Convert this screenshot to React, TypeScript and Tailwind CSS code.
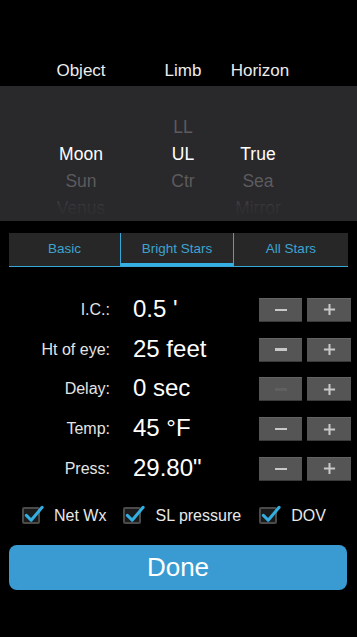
import React from "react";

const font = { fontFamily: '"Liberation Sans", Arial, sans-serif' };

function Check() {
  return (
    <span className="relative inline-block w-[18px] h-[17px] border-2 border-[#4a4a4a] bg-[#1a1a1a] rounded-[2px]">
      <svg className="absolute left-[-1px] top-[-5px]" width="23" height="21" viewBox="0 0 24 22">
        <path d="M3.5 12 L8.5 17 L20 3.5" fill="none" stroke="#33aee0" strokeWidth="3.2" strokeLinecap="round" strokeLinejoin="round" />
      </svg>
    </span>
  );
}

function StepBtn({ sign, disabled }: { sign: "-" | "+"; disabled?: boolean }) {
  return (
    <div className="h-[24px] bg-[#555555] border-t border-[#636363] border-b border-b-[#3a3a3a] flex items-center justify-center">
      {sign === "-" ? (
        <div className={`w-[12px] h-[2.5px] ${disabled ? "bg-[#606060]" : "bg-[#c8c8c8]"}`} />
      ) : (
        <svg width="13" height="13" viewBox="0 0 14 14">
          <path d="M7 1 V13 M1 7 H13" stroke="#c8c8c8" strokeWidth="2.2" />
        </svg>
      )}
    </div>
  );
}

const rows = [
  { label: "I.C.:", value: "0.5 '" },
  { label: "Ht of eye:", value: "25 feet" },
  { label: "Delay:", value: "0 sec", minusDisabled: true },
  { label: "Temp:", value: "45 °F" },
  { label: "Press:", value: '29.80"' },
];

const pickerRows: [string, string, string, string][] = [
  ["", "", "", "empty"],
  ["", "LL", "", "dim"],
  ["Moon", "UL", "True", "sel"],
  ["Sun", "Ctr", "Sea", "dim"],
  ["Venus", "", "Mirror", "faint"],
];

export default function App() {
  return (
    <div className="w-[357px] h-[637px] bg-black overflow-hidden flex flex-col" style={font}>
      {/* header */}
      <div className="h-[86px] flex items-end pb-[5px] pl-[30px]">
        <div className="grid grid-cols-[102px_102px_52px] w-full text-[17px] text-[#ececec] leading-[20px]">
          <div className="flex justify-center whitespace-nowrap">Object</div>
          <div className="flex justify-center whitespace-nowrap">Limb</div>
          <div className="flex justify-center whitespace-nowrap">Horizon</div>
        </div>
      </div>
      {/* picker */}
      <div className="relative h-[135px] bg-[#29282b] pl-[30px] overflow-hidden">
        {pickerRows.map((r, i) => {
          const cls =
            r[3] === "sel"
              ? "text-white"
              : r[3] === "faint"
              ? "text-[#3b3a3d]"
              : "text-[#5c5b5e]";
          return (
            <div key={i} className={`grid grid-cols-[102px_102px_48px] h-[27px] items-center text-[17.5px] leading-[20px] ${cls}`}>
              <div className="flex justify-center whitespace-nowrap">{r[0]}</div>
              <div className="flex justify-center whitespace-nowrap">{r[1]}</div>
              <div className="flex justify-center whitespace-nowrap">{r[2]}</div>
            </div>
          );
        })}
        <div className="absolute left-0 right-0 bottom-0 h-[16px] bg-gradient-to-b from-[#29282b]/40 to-[#29282b]" />
      </div>
      {/* tabs */}
      <div className="mt-[12px] mx-[9px] w-[339px] h-[34px] bg-[#272727] border-b border-[#36a7d6] grid grid-cols-[112px_113px_114px] text-[13.5px] text-[#3ea3cf]">
        <div className="flex items-center justify-center border-r border-[#36a7d6]">Basic</div>
        <div className="relative flex items-center justify-center border-r border-[#36a7d6]">
          Bright Stars
          <div className="absolute left-0 right-0 bottom-0 h-[3px] bg-[#36b0e2]" />
        </div>
        <div className="flex items-center justify-center">All Stars</div>
      </div>
      {/* value rows */}
      <div className="mt-[23px] flex flex-col">
        {rows.map((r) => (
          <div key={r.label} className="h-[39.75px] flex items-center">
            <div className="w-[110px] text-right text-[16px] text-[#e4e4e4] whitespace-nowrap">{r.label}</div>
            <div className="ml-[23px] w-[126px] text-[24px] text-white whitespace-nowrap leading-[26px] pb-[2px]">{r.value}</div>
            <div className="grid grid-cols-[43px_44px] gap-[5px]">
              <StepBtn sign="-" disabled={r.minusDisabled} />
              <StepBtn sign="+" />
            </div>
          </div>
        ))}
      </div>
      {/* checkboxes */}
      <div className="mt-[17px] h-[20px] flex items-center text-[16px] text-[#e8e8e8]">
        <div className="ml-[22px] flex items-center">
          <Check />
          <span className="ml-[14px]">Net Wx</span>
        </div>
        <div className="ml-[17px] flex items-center">
          <Check />
          <span className="ml-[14px]">SL pressure</span>
        </div>
        <div className="ml-[18px] flex items-center">
          <Check />
          <span className="ml-[14px]">DOV</span>
        </div>
      </div>
      {/* done */}
      <div className="mt-[19px] mx-[9px] w-[338px] h-[45px] rounded-[8px] bg-[#3a9bd2] flex items-center justify-center text-[26px] text-white">
        Done
      </div>
    </div>
  );
}
